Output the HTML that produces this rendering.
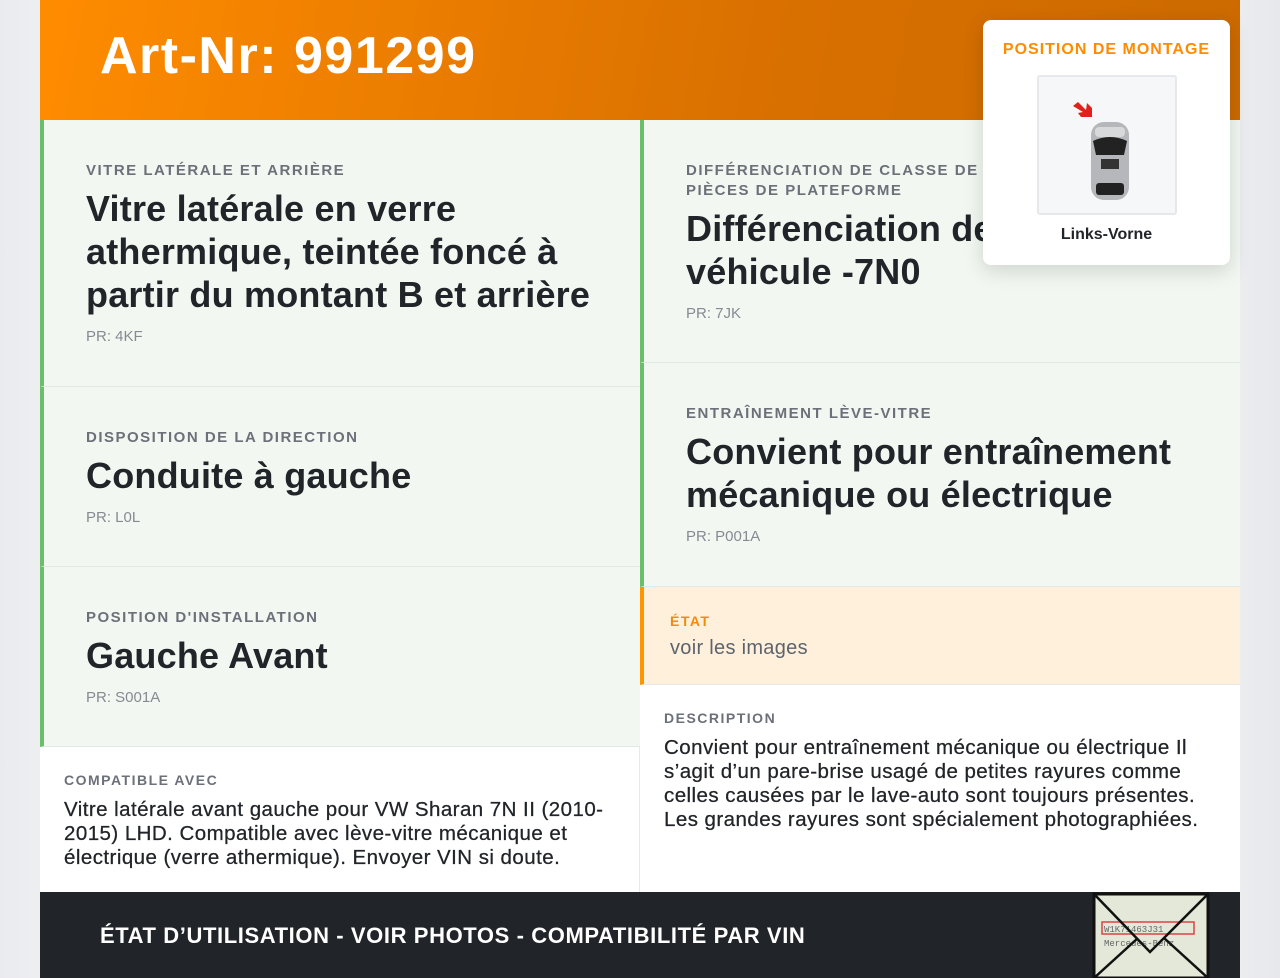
<!DOCTYPE html>
<html><head><meta charset="utf-8"><style>
*{box-sizing:border-box;margin:0;padding:0}
body{width:1280px;height:978px;overflow:hidden;background:linear-gradient(90deg,#e9ebee,#f4f5f7 10%,#f4f5f7 90%,#e6e8eb);font-family:"Liberation Sans",sans-serif;position:relative}
.page{position:absolute;left:40px;top:0;width:1200px;height:978px;background:#fff}
.hdr{position:absolute;left:0;top:0;width:1200px;height:120px;background:linear-gradient(100deg,#ff8c00,#d97000 60%,#cc6a00)}
.hdr h1{position:absolute;left:60px;top:26px;color:#fff;font-size:52px;font-weight:bold;letter-spacing:1.5px}
.cell{position:absolute;background:#f2f8f1;border-left:4px solid #6bbf6a;border-bottom:1px solid #e2e8e2}
.lab{font-size:15px;font-weight:bold;letter-spacing:1.5px;color:#6b7079;line-height:20px}
.big{font-size:36px;font-weight:bold;color:#212428;line-height:43px;margin-top:6px;letter-spacing:0.2px}
.pr{font-size:15px;color:#868b93;margin-top:12px}
.in{position:absolute;left:42px}
.txt{font-size:20.5px;color:#212428;line-height:24px;margin-top:8px;letter-spacing:0.45px;-webkit-text-stroke:0.25px #212428}
.card{position:absolute;left:943px;top:20px;width:247px;height:245px;background:#fff;border-radius:8px;box-shadow:0 6px 20px rgba(0,0,0,.15);text-align:center}
.foot{position:absolute;left:0;top:892px;width:1200px;height:86px;background:#212428}
</style></head><body><div class="page">
<div class="hdr"><h1>Art-Nr: 991299</h1></div>

<div class="cell" style="left:0;top:120px;width:600px;height:267px"><div class="in" style="top:41px;width:530px">
<div class="lab">VITRE LATÉRALE ET ARRIÈRE</div>
<div class="big">Vitre latérale en verre athermique, teintée foncé à partir du montant B et arrière</div>
<div class="pr">PR: 4KF</div></div></div>

<div class="cell" style="left:0;top:387px;width:600px;height:180px"><div class="in" style="top:41px">
<div class="lab">DISPOSITION DE LA DIRECTION</div>
<div class="big">Conduite à gauche</div>
<div class="pr">PR: L0L</div></div></div>

<div class="cell" style="left:0;top:567px;width:600px;height:180px"><div class="in" style="top:41px">
<div class="lab">POSITION D'INSTALLATION</div>
<div class="big">Gauche Avant</div>
<div class="pr">PR: S001A</div></div></div>

<div style="position:absolute;left:0;top:747px;width:600px;height:145px;border-right:1px solid #e6e8eb"><div style="position:absolute;left:24px;top:23px;width:550px">
<div class="lab" style="font-size:14px">COMPATIBLE AVEC</div>
<div class="txt">Vitre latérale avant gauche pour VW Sharan 7N II (2010-2015) LHD. Compatible avec lève-vitre mécanique et électrique (verre athermique). Envoyer VIN si doute.</div></div></div>

<div class="cell" style="left:600px;top:120px;width:600px;height:243px;overflow:hidden"><div class="in" style="top:41px;width:560px">
<div class="lab" style="white-space:nowrap">DIFFÉRENCIATION DE CLASSE DE VÉHICULE<br>PIÈCES DE PLATEFORME</div>
<div class="big">Différenciation de classe de véhicule -7N0</div>
<div class="pr">PR: 7JK</div></div></div>

<div class="cell" style="left:600px;top:363px;width:600px;height:224px"><div class="in" style="top:41px;width:530px">
<div class="lab">ENTRAÎNEMENT LÈVE-VITRE</div>
<div class="big">Convient pour entraînement mécanique ou électrique</div>
<div class="pr">PR: P001A</div></div></div>

<div style="position:absolute;left:600px;top:587px;width:600px;height:98px;background:#fff0dc;border-left:4px solid #ff9500;border-bottom:1px solid #e6e8eb"><div style="position:absolute;left:26px;top:24px">
<div class="lab" style="color:#f08a10;font-size:14px">ÉTAT</div>
<div style="font-size:20px;color:#5d636c;margin-top:6px;letter-spacing:0.3px">voir les images</div></div></div>

<div style="position:absolute;left:600px;top:685px;width:600px;height:207px"><div style="position:absolute;left:24px;top:23px;width:550px">
<div class="lab" style="font-size:14px">DESCRIPTION</div>
<div class="txt">Convient pour entraînement mécanique ou électrique Il s’agit d’un pare-brise usagé de petites rayures comme celles causées par le lave-auto sont toujours présentes. Les grandes rayures sont spécialement photographiées.</div></div></div>

<div class="card">
<div style="margin-top:21px;color:#ff8c00;font-size:16px;font-weight:bold;letter-spacing:1px">POSITION DE MONTAGE</div>
<div style="position:absolute;left:54px;top:55px;width:140px;height:140px;background:#f6f7f9;border:2px solid #e6e8eb;border-radius:3px">
<svg width="136" height="136" viewBox="0 0 136 136">
<path d="M34 29l5-4 8 8 1-7 5 5v9H42l-3-4 5-1z" fill="#e0201a"/>
<rect x="52" y="45" width="38" height="78" rx="13" fill="#b5b7ba"/>
<path d="M54 64q17-8 34 0l-3 14H57z" fill="#222"/>
<rect x="62" y="82" width="18" height="10" fill="#333"/>
<rect x="57" y="106" width="28" height="12" rx="3" fill="#222"/>
<rect x="56" y="50" width="30" height="10" rx="4" fill="#d8d9db"/>
</svg></div>
<div style="position:absolute;left:0;width:247px;top:206px;font-size:16px;font-weight:bold;color:#212428">Links-Vorne</div>
</div>

<div class="foot"><div style="position:absolute;left:60px;top:31px;color:#fff;font-size:22px;font-weight:bold;letter-spacing:0.6px">ÉTAT D’UTILISATION - VOIR PHOTOS - COMPATIBILITÉ PAR VIN</div>
<svg style="position:absolute;left:1052px;top:0" width="118" height="86" viewBox="0 0 118 86"><rect x="2" y="2" width="114" height="84" fill="#e3e8d8"/><rect x="10" y="30" width="92" height="12" fill="none" stroke="#d44" stroke-width="1.5"/><text x="12" y="40" font-size="9" fill="#666" font-family="Liberation Mono">W1K71463J31</text><text x="12" y="54" font-size="9" fill="#666" font-family="Liberation Mono">Mercedes-Benz</text><path d="M2 2L58 60 116 2M2 86L46 46M116 86L72 46" stroke="#111" stroke-width="2.5" fill="none"/><rect x="2" y="2" width="114" height="84" fill="none" stroke="#111" stroke-width="3"/></svg>
</div>
</div></body></html>
